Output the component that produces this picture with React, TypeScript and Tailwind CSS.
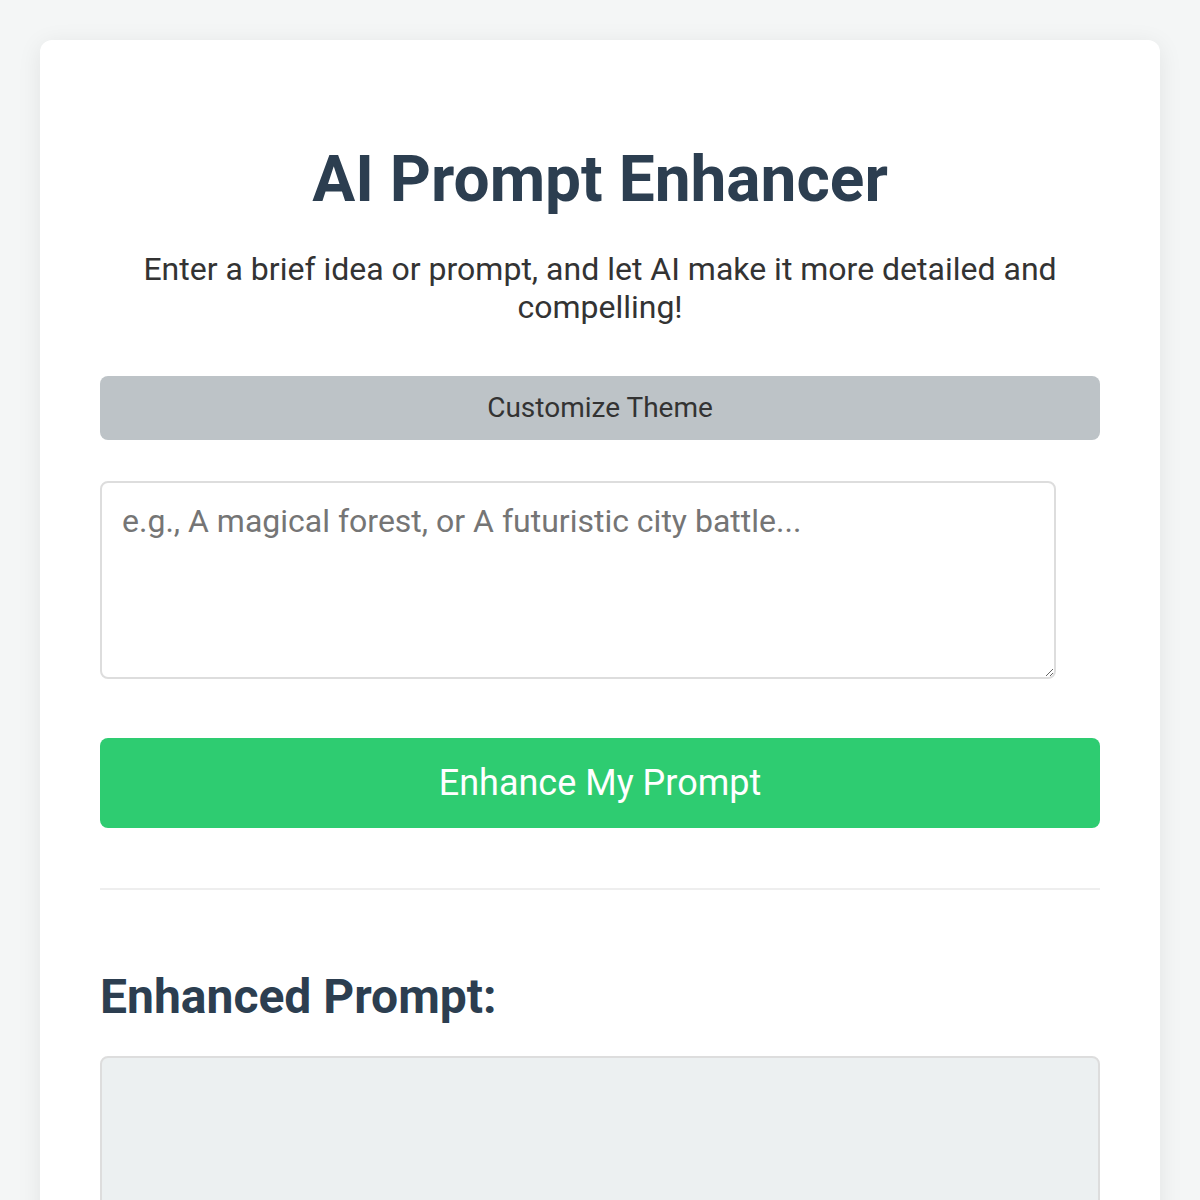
import React from 'react';

export default function App() {
  return (
    <div className="min-h-[1200px] bg-[#f4f6f6] px-10 pt-10 font-['Roboto','Liberation_Sans',sans-serif]">
      <div className="rounded-xl bg-white px-[60px] pt-[60px] pb-[60px] shadow-[0_4px_24px_rgba(0,0,0,0.08)]">
        <h1 className="pt-[42px] text-center text-[64px] font-bold leading-[76px] text-[#2c3e50]">
          AI Prompt Enhancer
        </h1>
        <p className="mx-auto mt-[32px] text-center text-[32px] leading-[38px] text-[#333]">
          Enter a brief idea or prompt, and let AI make it more detailed and compelling!
        </p>
        <button className="mt-[50px] h-16 w-full rounded-lg bg-[#bdc3c7] text-[28px] text-[#333]">
          Customize Theme
        </button>
        <textarea
          className="mt-[41px] block h-[198px] w-[956px] rounded-lg border-2 border-[#ddd] px-5 pt-[18px] text-[32px] leading-[40px] text-[#333] placeholder:text-[#757575] outline-none"
          placeholder="e.g., A magical forest, or A futuristic city battle..."
        />
        <button className="mt-[59px] h-[90px] w-full rounded-lg bg-[#2ecc71] text-[36px] text-white">
          Enhance My Prompt
        </button>
        <hr className="mt-[60px] border-t-2 border-[#eee]" />
        <h2 className="mt-[79px] text-[48px] font-bold leading-[56px] text-[#2c3e50]">
          Enhanced Prompt:
        </h2>
        <div className="mt-[31px] h-[200px] rounded-lg border-2 border-[#ddd] bg-[#ecf0f1]" />
      </div>
    </div>
  );
}
